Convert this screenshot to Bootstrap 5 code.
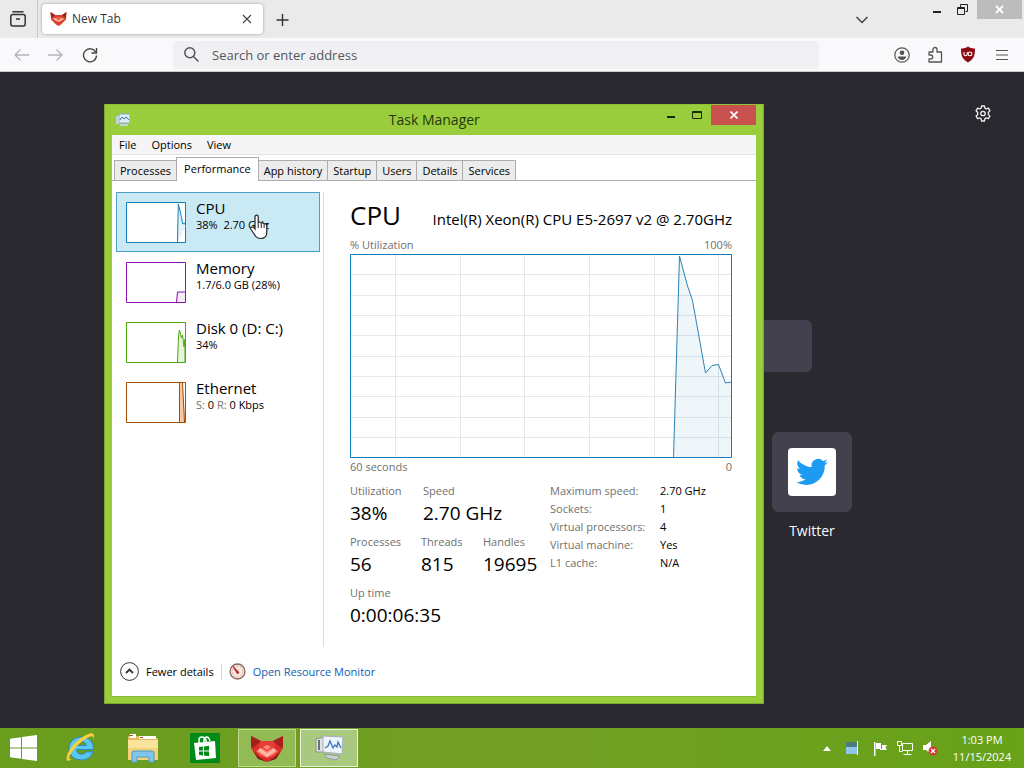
<!DOCTYPE html>
<html lang="en">
<head>
<meta charset="utf-8">
<meta name="viewport" content="width=device-width, initial-scale=1">
<title>Task Manager</title>
<link href="https://cdn.jsdelivr.net/npm/bootstrap@5.3.0/dist/css/bootstrap.min.css" rel="stylesheet">
<style>
  body { font-family: "Open Sans", "Noto Sans", sans-serif; font-size: 11px; line-height: 18px; color: #000; background: #2a2930; }
  button { background: none; border: 0; padding: 0; color: inherit; }
  svg { display: block; flex: none; }

  /* browser */
  .tabstrip { height: 38px; background: #eaeaea; }
  .tabstrip-pin { width: 38px; border-right: 1px solid #c8c8c8; padding-right: 2px; }
  .browser-tab { width: 221px; height: 30px; margin-left: 4px; padding: 0 10px 0 8px; gap: 5px; background: #fff; border-radius: 4px; box-shadow: 0 0 3px #999; font-size: 12px; color: #333; }
  .win-btns { padding-right: 2px; }
  .toolbar { height: 34px; background: #f9f9fb; border-bottom: 1px solid #ccc; padding: 0 16px 0 12px; }
  .tool-btns { width: 161px; gap: 17px; }
  .urlbar { height: 28px; background: #f0f0f3; border-radius: 4px; padding: 0 10px; gap: 12px; }
  .urlbar input { border: 0; background: none; outline: 0; padding: 0; font-size: 13px; color: #555; }
  .urlbar input::placeholder { color: #55555c; opacity: 1; }
  .tool-icons { width: 189px; gap: 16px; }
  .win-close { width: 45px; height: 19px; background: #bcbcbc; }
  .newtab-gear { padding: 33px 33px 0 0; }
  .newtab-col { max-width: 680px; padding-top: 198px; gap: 60px; }
  .newtab-search { width: 600px; max-width: 100%; height: 52px; border: 0; border-radius: 6px; background: #42414d; }
  .site-tile { width: 80px; color: #fbfbfe; font-size: 14px; gap: 9px; line-height: 20px; }
  .site-pad { width: 80px; height: 80px; border-radius: 7px; background: #42414d; }
  .site-logo { width: 48px; height: 48px; border-radius: 4px; background: #fff; }

  /* task manager window */
  .tm-window { left: 104px; top: 104px; width: 660px; background: #9acd3c; border: 1px solid #7da82f; border-top-color: #8fc02f; padding: 0 7px 6px; }
  .tm-title { height: 30px; }
  .tm-title h1 { font-size: 14px; line-height: 30px; color: #25380a; }
  .tm-close { width: 45px; height: 20px; background: #c8504f; }
  .tm-client { background: #fff; border-bottom: 1px solid #8db93a; }
  .tm-menu { height: 20px; background: #f5f5f5; border-bottom: 1px solid #e3e3e3; padding: 0 7px; gap: 15px; line-height: 19px; }
  .tm-tabs { height: 26px; padding: 2px 2px 0; border-bottom: 1px solid #acacac; }
  .tm-tabs button { height: 20px; padding: 0 5px 1px; background: #ececec; border: 1px solid #acacac; border-bottom: 0; line-height: 17px; margin-right: -1px; }
  .tm-tabs button.on { height: 24px; padding: 0 7px 3px; background: #fff; margin-bottom: -1px; z-index: 1; }
  .tm-body { padding: 11px 24px 0 4px; height: 466px; }
  .tm-list { width: 208px; border-right: 1px solid #dcdcdc; padding-right: 3px; }
  .tm-item { height: 60px; padding: 7px 9px 0; gap: 10px; border: 1px solid transparent; line-height: 18px; text-align: left; }
  .tm-item svg { margin-top: 2px; }
  .tm-item.on { background: #c9e9f5; border-color: #4ba0c4; }
  .tm-item .nm { font-size: 15px; line-height: 16px; }
  .tm-detail { padding-left: 26px; }
  .tm-detail h2 { font-size: 26px; line-height: 34px; }
  .tm-head { padding-top: 6px; }
  .cpu-name { font-size: 15px; line-height: 34px; }
  .dim { color: #707070; }
  .lbl-row { line-height: 16px; }
  .num { font-size: 19px; line-height: 28px; }
  .stat-a { width: 73px; } .stat-b { width: 71px; } .stat-c { width: 62px; }
  .tm-stats { padding-top: 6px; }
  .stats { width: 200px; padding-top: 1px; }
  .stat-row { height: 51px; }
  .spec th { font-weight: 400; width: 110px; padding: 0; } .spec td { padding: 0; }
  .tm-foot { height: 49px; padding: 0 8px; gap: 7px; }
  .tm-foot button { gap: 7px; }
  .tm-foot a { color: #0a5eb5; text-decoration: none; }
  .tm-sep { width: 1px; height: 16px; background: #d8d8d8; }
  .pointer { left: 249px; top: 214px; z-index: 5; pointer-events: none; }

  /* taskbar */
  .taskbar { height: 40px; background: linear-gradient(90deg, #6a9d1e, #739f25 50%, #67a218); color: #fff; }
  .start-btn { width: 52px; padding-left: 10px; }
  .task-btn { width: 58px; height: 38px; margin-right: 4px; border: 1px solid transparent; }
  .task-btn.open { background: #93bb55; border-color: #c0da93; }
  .task-btn.front { background: #a9c980; border-color: #edf5df; }
  .tray { gap: 14px; padding-right: 12px; }
  .tray-icons { gap: 9px; }
  .clock { font-size: 11px; line-height: 17px; width: 60px; }
</style>
</head>
<body>
<div class="d-flex flex-column vh-100 overflow-hidden position-relative">

  <header>
    <div class="tabstrip d-flex align-items-center">
      <button class="tabstrip-pin h-100 d-flex align-items-center justify-content-center" aria-label="Firefox View">
        <svg width="18" height="18" viewBox="0 0 18 18" fill="none" stroke="#333" stroke-width="1.5"><path d="M3.5 1.8h11"/><rect x="1.8" y="4.5" width="14.4" height="11.5" rx="2"/><path d="M7 9h4"/></svg>
      </button>
      <div class="browser-tab d-flex align-items-center">
        <svg width="17" height="16" viewBox="0 0 34 30"><path d="M1 1l9 6h14l9-6-1 15-10 10-5 3-5-3L2 16z" fill="#d9402f"/><path d="M1 1l9 6-7 6zM33 1l-9 6 7 6z" fill="#8e2420"/><path d="M5 14l7-1 5 5 5-5 7 1-7 5-5 2-5-2z" fill="#ffb3a0"/><path d="M12 11h10l-5 7z" fill="#f2614b"/></svg>
        <span class="flex-grow-1">New Tab</span>
        <button aria-label="Close tab"><svg width="12" height="12" viewBox="0 0 12 12" stroke="#444" stroke-width="1.1"><path d="M2 2l8 8M10 2l-8 8"/></svg></button>
      </div>
      <button class="ms-2 ps-1" aria-label="New tab"><svg width="15" height="15" viewBox="0 0 15 15" stroke="#333" stroke-width="1.4"><path d="M7.500 2v12M1.500 8h12"/></svg></button>
      <div class="win-btns ms-auto d-flex align-self-start align-items-start">
        <button class="pt-3 me-5" aria-label="List all tabs"><svg width="14" height="8" viewBox="0 0 14 8" fill="none" stroke="#444" stroke-width="1.5"><path d="M1.500 1L7 6.500 12.500 1"/></svg></button>
        <button class="ms-3 me-3 pt-2" aria-label="Minimize"><svg width="8" height="8" viewBox="0 0 8 8"><path d="M0 3h8v2H0z" fill="#222"/></svg></button>
        <button class="me-2 pt-1" aria-label="Restore"><svg width="12" height="12" viewBox="0 0 12 12" fill="none" stroke="#222"><path d="M3.500 3V.5h7v7H8.500"/><path d="M.5 3.500h7v7h-7zM.5 4.500h7"/></svg></button>
        <button class="win-close d-flex align-items-center justify-content-center" aria-label="Close window"><svg width="9" height="9" viewBox="0 0 9 9" stroke="#fff" stroke-width="1.8"><path d="M1 1l7 7M8 1L1 8"/></svg></button>
      </div>
    </div>

    <div class="toolbar d-flex align-items-center">
      <div class="tool-btns d-flex align-items-center">
        <button aria-label="Back"><svg width="18" height="16" viewBox="0 0 18 16" fill="none" stroke="#b4b4b8" stroke-width="1.3"><path d="M17 8H3M8.500 2.500L3 8l5.500 5.500"/></svg></button>
        <button aria-label="Forward"><svg width="18" height="16" viewBox="0 0 18 16" fill="none" stroke="#b4b4b8" stroke-width="1.3"><path d="M1 8h14M9.500 2.500L15 8l-5.500 5.500"/></svg></button>
        <button aria-label="Reload"><svg width="16" height="16" viewBox="0 0 16 16" fill="none" stroke="#444" stroke-width="1.4"><path d="M13.600 5A6.500 6.500 0 1 0 14.500 8.500"/><path d="M14.500 1v5h-5"/></svg></button>
      </div>
      <div class="urlbar flex-grow-1 d-flex align-items-center">
        <svg width="17" height="17" viewBox="0 0 17 17" fill="none" stroke="#55555c" stroke-width="1.5"><circle cx="6.800" cy="6.800" r="5"/><path d="M10.500 10.500L15.500 15.500"/></svg>
        <input class="flex-grow-1" type="text" placeholder="Search or enter address" aria-label="Search or enter address">
      </div>
      <div class="tool-icons d-flex align-items-center justify-content-end">
        <button aria-label="Account"><svg width="16" height="16" viewBox="0 0 16 16" fill="none" stroke="#555" stroke-width="1.2"><circle cx="8" cy="8" r="7.200"/><circle cx="8" cy="5.800" r="2.300" fill="#555" stroke="none"/><path d="M3.800 9.500h8.400c0 1.500-1.500 3.500-4.200 3.500S3.800 11 3.800 9.500z" fill="#555" stroke="none"/></svg></button>
        <button aria-label="Extensions"><svg width="18" height="18" viewBox="0 0 18 18" fill="none" stroke="#555" stroke-width="1.3"><path d="M3 6h4V3.500a2 2 0 0 1 4 0V6h4.500v10H3v-3.200h1.800a1.900 1.900 0 0 0 0-3.800H3z" stroke-linejoin="round"/></svg></button>
        <button aria-label="Content blocker"><svg width="16" height="17" viewBox="0 0 16 17"><path d="M8 .5C6 2 3.500 2.600 1 2.600c0 6 .5 10.400 7 13.900 6.500-3.500 7-7.900 7-13.900C12.500 2.600 10 2 8 .5z" fill="#8c0a12"/><path d="M4 6v2.200q0 1.500 1.500 1.500T7.300 8.200V6" fill="none" stroke="#fff" stroke-width="1.100"/><circle cx="10" cy="7.900" r="1.900" fill="none" stroke="#fff" stroke-width="1.100"/></svg></button>
        <button class="ms-1" aria-label="Application menu"><svg width="12" height="12" viewBox="0 0 12 12" stroke="#555" stroke-width="1.100"><path d="M0 1.500h12M0 6h12M0 10.500h12"/></svg></button>
      </div>
    </div>
  </header>

  <main class="flex-grow-1 position-relative">
    <div class="newtab-gear d-flex justify-content-end">
      <button aria-label="Personalize new tab"><svg width="16" height="17" viewBox="0 0 16 17" fill="none" stroke="#f0f0f4" stroke-width="1.3" stroke-linejoin="round"><path d="M6.600 1h2.800l.5 2.200 1.300.7 2.200-.8 1.500 2.500L13.300 7.500v1.900l1.600 1.700-1.500 2.500-2.200-.7-1.300.7L9.400 16H6.600l-.5-2.300-1.300-.7-2.200.7-1.500-2.500 1.600-1.700V7.500L1.100 5.700l1.500-2.500 2.200.7 1.300-.7z"/><circle cx="8" cy="8.500" r="2.200"/></svg></button>
    </div>
    <div class="newtab-col d-flex flex-column mx-auto">
      <input class="newtab-search mx-auto" type="search" aria-label="Search the web">
      <div class="d-flex justify-content-end">
        <a href="#" class="site-tile d-flex flex-column align-items-center text-decoration-none">
          <span class="site-pad d-flex align-items-center justify-content-center">
            <span class="site-logo d-flex align-items-center justify-content-center">
              <svg width="32" height="32" viewBox="0 0 24 24"><path fill="#1d9bf0" d="M23.950 4.570a10 10 0 0 1-2.820.770 4.960 4.960 0 0 0 2.160-2.720c-.950.550-2 .960-3.130 1.180a4.920 4.920 0 0 0-8.380 4.480C7.690 8.100 4.070 6.130 1.640 3.160a4.820 4.820 0 0 0-.660 2.480c0 1.710.870 3.210 2.190 4.100a4.900 4.900 0 0 1-2.230-.620v.060a4.920 4.920 0 0 0 3.950 4.830 5 5 0 0 1-2.210.080 4.940 4.940 0 0 0 4.600 3.420A9.870 9.870 0 0 1 0 19.540a14 14 0 0 0 7.550 2.210c9.050 0 14-7.500 14-13.980 0-.210 0-.420-.020-.630a9.940 9.940 0 0 0 2.420-2.570z"/></svg>
            </span>
          </span>
          <span>Twitter</span>
        </a>
      </div>
    </div>
  </main>

  <section class="tm-window position-absolute" aria-label="Task Manager">
    <div class="tm-title d-flex align-items-start">
      <div class="flex-fill w-50 pt-2 ps-1">
        <svg width="14" height="14" viewBox="0 0 14 14"><rect x="3" y="1" width="11" height="9" fill="#dcecf7" stroke="#8ba9bd"/><path d="M4 7l2-3 2 2 2-2 3 3" fill="none" stroke="#3477aa"/><path d="M0 3h3v8H0zM4 11h8v2H4z" fill="#c3d2d9"/></svg>
      </div>
      <h1 class="m-0 fw-normal text-nowrap">Task Manager</h1>
      <div class="flex-fill w-50 d-flex justify-content-end">
        <button class="me-3" aria-label="Minimize"><svg width="9" height="14" viewBox="0 0 9 14"><path d="M0 8h8v2H0z" fill="#1c2a08"/></svg></button>
        <button class="me-2" aria-label="Maximize"><svg width="11" height="12" viewBox="0 0 11 12" fill="none" stroke="#1c2a08"><path d="M.5 2.500h9v7h-9zM.5 3.500h9"/></svg></button>
        <button class="tm-close d-flex align-items-center justify-content-center" aria-label="Close"><svg width="8" height="8" viewBox="0 0 8 8" stroke="#fff" stroke-width="1.600"><path d="M.5.5l7 7M7.500.5l-7 7"/></svg></button>
      </div>
    </div>
    <div class="tm-client">
      <nav class="tm-menu d-flex">
        <button>File</button><button>Options</button><button>View</button>
      </nav>
      <div class="tm-tabs d-flex align-items-end" role="tablist">
        <button role="tab">Processes</button>
        <button role="tab" class="on position-relative" aria-selected="true">Performance</button>
        <button role="tab">App history</button>
        <button role="tab">Startup</button>
        <button role="tab">Users</button>
        <button role="tab">Details</button>
        <button role="tab">Services</button>
      </div>
      <div class="tm-body d-flex">
        <div class="tm-list d-flex flex-column flex-shrink-0">
          <button class="tm-item on d-flex">
            <svg width="60" height="41" viewBox="0 0 60 41" fill="#fff" stroke="#117dbb"><path d="M.5.5h59v40H.5z"/><path d="M51.500 40L52.300 2l2 8 2.500 12 2-1 1 3" fill="#e3f1f9"/></svg>
            <span><span class="nm d-block">CPU</span>38%&nbsp; 2.70 GHz</span>
          </button>
          <button class="tm-item d-flex">
            <svg width="60" height="41" viewBox="0 0 60 41" fill="#fff" stroke="#8b12ae"><path d="M.5.5h59v40H.5z"/><path d="M50.500 40l1-10h8v10" fill="#f6ecf9"/></svg>
            <span><span class="nm d-block">Memory</span>1.7/6.0 GB (28%)</span>
          </button>
          <button class="tm-item d-flex">
            <svg width="60" height="41" viewBox="0 0 60 41" fill="#fff" stroke="#4da60c"><path d="M.5.5h59v40H.5z"/><path d="M51.500 40l1-26 1-6 2 8 1-3 1.500 12 1-8V40" fill="#e6f4dc"/></svg>
            <span><span class="nm d-block">Disk 0 (D: C:)</span>34%</span>
          </button>
          <button class="tm-item d-flex">
            <svg width="60" height="41" viewBox="0 0 60 41" fill="#fff" stroke="#a74f01"><path d="M.5.5h59v40H.5z"/><path d="M53.500 1h3l2.500 39h-5.500z" fill="#f9c9a4" stroke="none"/><path d="M53.500 40V1M56.500 1l2 39"/></svg>
            <span><span class="nm d-block">Ethernet</span><span class="dim">S:</span> 0 <span class="dim">R:</span> 0 Kbps</span>
          </button>
        </div>
        <div class="tm-detail flex-grow-1">
          <div class="tm-head d-flex align-items-baseline justify-content-between">
            <h2 class="m-0 fw-normal">CPU</h2><span class="cpu-name">Intel(R) Xeon(R) CPU E5-2697 v2 @ 2.70GHz</span>
          </div>
          <div class="dim d-flex justify-content-between"><span>% Utilization</span><span>100%</span></div>
          <svg class="w-100" height="204" viewBox="0 0 382 204" preserveAspectRatio="none" fill="none">
            <path d="M0 20.500h382M0 41.500h382M0 61.500h382M0 81.500h382M0 102.500h382M0 122.500h382M0 142.500h382M0 163.500h382M0 183.500h382M45.500 0v204M110.500 0v204M174.500 0v204M239.500 0v204M304.500 0v204M368.500 0v204" stroke="#e2e8ec"/>
            <path d="M323.500 204L329.500 2l8 30 5 14.500 13 72.500 6.500-7.500 6.500-1 7 18.500 6-1V204z" fill="#117dbb" fill-opacity=".07"/>
            <path d="M323.500 204L329.500 2l8 30 5 14.500 13 72.500 6.500-7.500 6.500-1 7 18.500 6-1" stroke="#2a83b5"/>
            <path d="M.5.5h381v203H.5z" stroke="#117dbb"/>
          </svg>
          <div class="dim d-flex justify-content-between"><span>60 seconds</span><span>0</span></div>
          <div class="tm-stats d-flex">
            <div class="stats flex-shrink-0 text-nowrap">
              <div class="stat-row d-flex lbl-row">
                <div class="stat-a"><div class="dim">Utilization</div><div class="num">38%</div></div>
                <div><div class="dim">Speed</div><div class="num">2.70 GHz</div></div>
              </div>
              <div class="stat-row d-flex lbl-row">
                <div class="stat-b"><div class="dim">Processes</div><div class="num">56</div></div>
                <div class="stat-c"><div class="dim">Threads</div><div class="num">815</div></div>
                <div><div class="dim">Handles</div><div class="num">19695</div></div>
              </div>
              <div class="stat-row lbl-row">
                <div class="dim">Up time</div><div class="num">0:00:06:35</div>
              </div>
            </div>
            <table class="spec align-self-start">
              <tr><th class="dim" scope="row">Maximum speed:</th><td>2.70 GHz</td></tr>
              <tr><th class="dim" scope="row">Sockets:</th><td>1</td></tr>
              <tr><th class="dim" scope="row">Virtual processors:</th><td>4</td></tr>
              <tr><th class="dim" scope="row">Virtual machine:</th><td>Yes</td></tr>
              <tr><th class="dim" scope="row">L1 cache:</th><td>N/A</td></tr>
            </table>
          </div>
        </div>
      </div>
      <footer class="tm-foot d-flex align-items-center">
        <button class="d-flex align-items-center">
          <svg width="19" height="19" viewBox="0 0 19 19" fill="none" stroke="#333"><circle cx="9.500" cy="9.500" r="8.900"/><path d="M6 11l3.500-3.500L13 11" stroke-width="1.800"/></svg>Fewer details
        </button>
        <span class="tm-sep"></span>
        <svg width="17" height="17" viewBox="0 0 17 17"><circle cx="8.500" cy="8.500" r="7.500" fill="#f6e9e2" stroke="#8a6a60" stroke-width="1.300"/><circle cx="8.500" cy="8.500" r="5.500" fill="none" stroke="#dfa08e" stroke-dasharray="2 1.500"/><path d="M4 3.500l6 6-1.500 1.300z" fill="#b3202a" stroke="#b3202a"/></svg>
        <a href="#">Open Resource Monitor</a>
      </footer>
    </div>
  </section>

  <footer class="taskbar d-flex align-items-center">
    <button class="start-btn" aria-label="Start"><svg width="27" height="26" viewBox="0 0 27 26" fill="#fff"><path d="M0 3.800l11-1.600v10.200H0zM12 2l15-2v12.400H12zM0 13.400h11v10.400L0 22.200zM12 13.400h15V26l-15-2z"/></svg></button>
    <button class="task-btn d-flex align-items-center justify-content-center" aria-label="Internet Explorer"><svg width="32" height="32" viewBox="0 0 32 32"><path d="M28.500 17.500H11.500c.2 3 2.300 4.700 5 4.700 2 0 3.500-.8 4.500-2.300h7c-1.700 5-6 8-11.700 8C9 27.900 4 23.200 4 16.600S9.200 5 16.300 5c7.500 0 12.500 5 12.200 12.500zM11.700 13.500h9.600c-.4-2.500-2.200-4-4.800-4s-4.400 1.500-4.800 4z" fill="#5cc6f2" stroke="#268bc4"/><path d="M7 27c-5 4-7 1-4-6C7 12 18 3 25 1.500c4-.8 5 2 3 6.500 1-4-1-4.500-4-3C17 8 8 17 5 23c-1.500 3-.7 5 2 4z" fill="#fbd13b"/></svg></button>
    <button class="task-btn d-flex align-items-center justify-content-center" aria-label="File Explorer"><svg width="32" height="30" viewBox="0 0 32 30"><path d="M1 3h12l2 2h16v22H1z" fill="#e2b95d"/><path d="M3 1h6v4H3zM12 3h17v3H12z" fill="#fff"/><path d="M3 2h3v1H3zM13 4h3v1h-3z" fill="#b34732"/><path d="M1 7h30v20H1z" fill="#fae49b"/><path d="M1 15h30v12H1z" fill="#f3d27b"/><path d="M5 29V20q0-2 2-2h18q2 0 2 2v9h-5v-5H10v5z" fill="#7fc5ec" stroke="#4b9ed0"/></svg></button>
    <button class="task-btn d-flex align-items-center justify-content-center" aria-label="Store"><svg width="30" height="30" viewBox="0 0 30 30"><path d="M0 0h30v30H0z" fill="#008a17"/><path d="M4 10l21-2 1 17-20 2z" fill="#fff"/><path d="M9 10V7q0-3 3-3t4 3v2M14 9V6q1-2 3-2t3 4" fill="none" stroke="#fff" stroke-width="1.500"/><path d="M9 14l4-.5v4H9zM14 13.400l5-.6v4.700h-5zM9 18.500h4v4l-4-.5zM14 18.500h5v4.700l-5-.6z" fill="#008a17"/></svg></button>
    <button class="task-btn open d-flex align-items-center justify-content-center" aria-label="Browser"><svg width="34" height="27" viewBox="0 0 34 27"><path d="M1 1l10 5h12l10-5v12l-5 8-7 4-4 2-4-2-7-4-5-8z" fill="#d92f27"/><path d="M1 1l10 5-8 7-2-1zM33 1l-10 5 8 7 2-1z" fill="#a5201d"/><path d="M3 16l6 6 8 5-9-3zM31 16l-6 6-8 5 9-3z" fill="#831a1b"/><path d="M6 16l11-7 11 7-4 4-7 3-7-3z" fill="#f9705f"/><path d="M10 13l7 5 7-5 2 3-9 6-9-6z" fill="#ffb9aa"/><path d="M11 6h12l3 5-9 5-9-5z" fill="#e63e36"/><path d="M13 12l4-2 4 2-4 3z" fill="#ff8b7b"/></svg></button>
    <button class="task-btn front d-flex align-items-center justify-content-center" aria-label="Task Manager"><svg width="31" height="28" viewBox="0 0 31 28"><path d="M2 5l9-2v15H2z" fill="#dde3e2" stroke="#87938d"/><path d="M4 6h2v10H4z" fill="#68736e"/><path d="M9 2l20 1-1 17-19-2z" fill="#edf4fb" stroke="#a2b0b8"/><path d="M11 14l3-2 2-5 3 7 2-3 2 2 1-5 3 6" fill="none" stroke="#3d76bd" stroke-width="1.300"/><path d="M10 20l16 2-4 4-9-2z" fill="#c8d2d0" stroke="#8c9b96"/></svg></button>

    <div class="tray ms-auto d-flex align-items-center">
      <button aria-label="Show hidden icons"><svg width="8" height="5" viewBox="0 0 8 5"><path d="M4 0l4 5H0z" fill="#fff"/></svg></button>
      <svg width="14" height="14" viewBox="0 0 14 14"><path d="M1 1h12v6H1z" fill="#4d7c7e"/><path d="M1 6h12v7H1z" fill="#8fc5ed"/><path d="M12.500 0v14" stroke="#eaf3fa"/></svg>
      <div class="tray-icons d-flex align-items-center">
        <svg width="15" height="15" viewBox="0 0 15 15" fill="#fff"><path d="M1 1h1.500v14H1zM3 2h5v6H3zM9 4h5l-1.500 2.500L14 9H7V8h2z"/></svg>
        <svg width="16" height="16" viewBox="0 0 16 16" fill="none" stroke="#fff"><path d="M5.500 3.500h10v7h-10zM10.500 11v3M6.500 14.500h8M.5 1.500h4v4h-4zM2.500 6v5.500h3"/></svg>
        <svg width="16" height="16" viewBox="0 0 16 16"><path d="M1 5h3l5-4v13l-5-4H1z" fill="#fff"/><circle cx="11" cy="11" r="4.500" fill="#d13b31"/><path d="M9 9l4 4M13 9l-4 4" stroke="#fff" stroke-width="1.300"/></svg>
      </div>
      <time class="clock text-center text-nowrap">1:03 PM<br>11/15/2024</time>
    </div>
  </footer>

  <svg class="pointer position-absolute" width="20" height="26" viewBox="0 0 20 26"><path d="M6 15V3q0-1.800 1.600-1.800T9.200 3v6.500q.2-1.500 1.600-1.500t1.500 1.700q.3-1 1.500-.9t1.300 1.700q.3-.8 1.400-.6T17.800 12v6q0 6.500-6 6.500-4 0-6-3.500L2 15.500q-1-1.600.3-2.300T5 13.700z" fill="#fff" stroke="#222" stroke-width="1.200"/><path d="M9.200 9.500V14M12.300 10v4M15.100 11v3" stroke="#222"/></svg>
</div>
<script src="https://cdn.jsdelivr.net/npm/bootstrap@5.3.0/dist/js/bootstrap.bundle.min.js"></script>
</body>
</html>
